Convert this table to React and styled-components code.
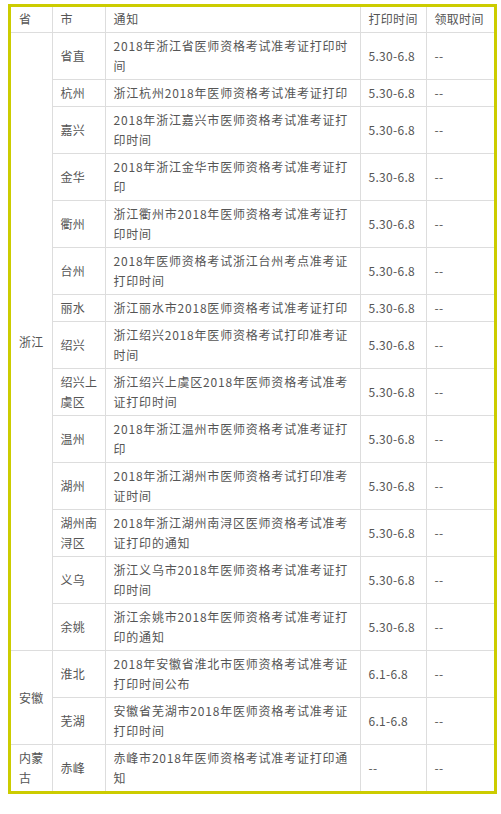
import React from "react";
import styled, { createGlobalStyle } from "styled-components";

const Global = createGlobalStyle`
  html, body { margin: 0; padding: 0; background: #fff; }
  body { font-family: "Noto Sans CJK SC", "Microsoft YaHei", sans-serif; }
`;

const Frame = styled.div`
  box-sizing: border-box;
  width: 489px;
  margin: 4px 0 0 8px;
  border: 3px solid #cccc00;
`;

const Table = styled.table`
  width: 483px;
  table-layout: fixed;
  border-collapse: collapse;
  border-style: hidden;
  font-size: 12px;
  line-height: 20px;
  color: #555;
`;

const Cell = styled.td`
  border: 1px solid #dddddd;
  padding: 3px 6px 3px 8px;
  vertical-align: middle;
  text-align: left;
  word-break: break-all;
  letter-spacing: ${(p) => (p.$wide ? "0.8px" : "0.3px")};
`;

const Head = styled(Cell).attrs({ as: "th" })`
  font-weight: normal;
  padding-top: 2px;
  padding-bottom: 3px;
`;

const groups = [
  {
    prov: "浙江",
    rows: [
      ["省直", "2018年浙江省医师资格考试准考证打印时间", "5.30-6.8", "--"],
      ["杭州", "浙江杭州2018年医师资格考试准考证打印", "5.30-6.8", "--"],
      ["嘉兴", "2018年浙江嘉兴市医师资格考试准考证打印时间", "5.30-6.8", "--"],
      ["金华", "2018年浙江金华市医师资格考试准考证打印", "5.30-6.8", "--"],
      ["衢州", "浙江衢州市2018年医师资格考试准考证打印时间", "5.30-6.8", "--"],
      ["台州", "2018年医师资格考试浙江台州考点准考证打印时间", "5.30-6.8", "--"],
      ["丽水", "浙江丽水市2018医师资格考试准考证打印", "5.30-6.8", "--"],
      ["绍兴", "浙江绍兴2018年医师资格考试打印准考证时间", "5.30-6.8", "--"],
      ["绍兴上虞区", "浙江绍兴上虞区2018年医师资格考试准考证打印时间", "5.30-6.8", "--"],
      ["温州", "2018年浙江温州市医师资格考试准考证打印", "5.30-6.8", "--"],
      ["湖州", "2018年浙江湖州市医师资格考试打印准考证时间", "5.30-6.8", "--"],
      ["湖州南浔区", "2018年浙江湖州南浔区医师资格考试准考证打印的通知", "5.30-6.8", "--"],
      ["义乌", "浙江义乌市2018年医师资格考试准考证打印时间", "5.30-6.8", "--"],
      ["余姚", "浙江余姚市2018年医师资格考试准考证打印的通知", "5.30-6.8", "--"],
    ],
  },
  {
    prov: "安徽",
    rows: [
      ["淮北", "2018年安徽省淮北市医师资格考试准考证打印时间公布", "6.1-6.8", "--"],
      ["芜湖", "安徽省芜湖市2018年医师资格考试准考证打印时间", "6.1-6.8", "--"],
    ],
  },
  {
    prov: "内蒙古",
    rows: [["赤峰", "赤峰市2018年医师资格考试准考证打印通知", "--", "--"]],
  },
];

export default function App() {
  return (
    <>
      <Global />
      <Frame>
        <Table>
          <colgroup>
            <col style={{ width: 41 }} />
            <col style={{ width: 53 }} />
            <col style={{ width: 255 }} />
            <col style={{ width: 66 }} />
            <col style={{ width: 68 }} />
          </colgroup>
          <thead>
            <tr>
              <Head>省</Head>
              <Head>市</Head>
              <Head $wide>通知</Head>
              <Head>打印时间</Head>
              <Head>领取时间</Head>
            </tr>
          </thead>
          <tbody>
            {groups.map((g) =>
              g.rows.map((r, i) => (
                <tr key={g.prov + r[0]}>
                  {i === 0 && <Cell rowSpan={g.rows.length}>{g.prov}</Cell>}
                  <Cell>{r[0]}</Cell>
                  <Cell $wide>{r[1]}</Cell>
                  <Cell>{r[2]}</Cell>
                  <Cell>{r[3]}</Cell>
                </tr>
              ))
            )}
          </tbody>
        </Table>
      </Frame>
    </>
  );
}
